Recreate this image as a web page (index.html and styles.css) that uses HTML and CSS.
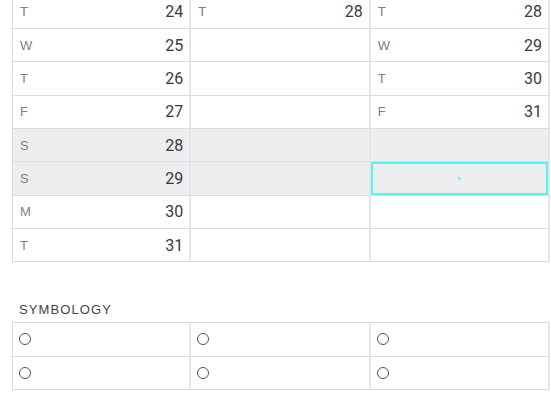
FILE: index.html
```html
<!DOCTYPE html>
<html>
<head>
<meta charset="utf-8">
<link rel="stylesheet" href="styles.css">
</head>
<body>
<div class="page">
  <div class="grid cal">
    <div class="cell"><span class="day">T</span><span class="num">24</span></div>
    <div class="cell"><span class="day">T</span><span class="num">28</span></div>
    <div class="cell"><span class="day">T</span><span class="num">28</span></div>

    <div class="cell"><span class="day">W</span><span class="num">25</span></div>
    <div class="cell"></div>
    <div class="cell"><span class="day">W</span><span class="num">29</span></div>

    <div class="cell"><span class="day">T</span><span class="num">26</span></div>
    <div class="cell"></div>
    <div class="cell"><span class="day">T</span><span class="num">30</span></div>

    <div class="cell"><span class="day">F</span><span class="num">27</span></div>
    <div class="cell"></div>
    <div class="cell"><span class="day">F</span><span class="num">31</span></div>

    <div class="cell weekend"><span class="day">S</span><span class="num">28</span></div>
    <div class="cell weekend"></div>
    <div class="cell weekend"></div>

    <div class="cell weekend"><span class="day">S</span><span class="num">29</span></div>
    <div class="cell weekend"></div>
    <div class="cell weekend selected"><span class="dot"></span></div>

    <div class="cell"><span class="day">M</span><span class="num">30</span></div>
    <div class="cell"></div>
    <div class="cell"></div>

    <div class="cell"><span class="day">T</span><span class="num">31</span></div>
    <div class="cell"></div>
    <div class="cell"></div>
  </div>

  <div class="heading">SYMBOLOGY</div>

  <div class="grid sym">
    <div class="cell"><span class="circle"></span></div>
    <div class="cell"><span class="circle"></span></div>
    <div class="cell"><span class="circle"></span></div>
    <div class="cell"><span class="circle"></span></div>
    <div class="cell"><span class="circle"></span></div>
    <div class="cell"><span class="circle"></span></div>
  </div>
</div>
</body>
</html>
```

FILE: styles.css
```css
html, body {
  margin: 0;
  padding: 0;
  background: #ffffff;
}

body {
  font-family: "Liberation Sans", Arial, sans-serif;
  overflow: hidden;
  width: 551px;
  height: 400px;
}

.page {
  padding-left: 12px;
  margin-top: -4.4px;
}

.grid {
  display: grid;
  grid-template-columns: repeat(3, 179.33px);
  grid-auto-rows: 33.33px;
  width: 538px;
}

.cell {
  box-sizing: border-box;
  display: flex;
  align-items: center;
  justify-content: space-between;
  padding: 0 6px 0 6px;
  border-bottom: 1px solid #dcdcdc;
  border-right: 2px solid #e6e6e6;
  position: relative;
}

.cell:nth-child(3n+1) {
  border-left: 1px solid #dcdcdc;
}

.weekend {
  background: #edeef0;
}

.day {
  font-size: 13px;
  color: #808080;
  padding-left: 1px;
}

.num {
  font-family: Roboto, "Liberation Sans", sans-serif;
  font-size: 16px;
  color: #3a3a3a;
}

.selected {
  box-shadow: inset 0 0 0 2px #55f4f4;
}

.dot {
  position: absolute;
  left: 50%;
  top: 50%;
  width: 3px;
  height: 3px;
  margin: -1px 0 0 -1px;
  background: #7ff5f5;
}

.heading {
  margin-top: 40px;
  padding-left: 7px;
  font-size: 13px;
  letter-spacing: 1.1px;
  color: #444444;
  line-height: 16px;
  height: 20px;
}

.sym {
  border-top: 1px solid #dcdcdc;
}

.circle {
  width: 10px;
  height: 10px;
  border: 1.5px solid #555555;
  border-radius: 50%;
}
```
